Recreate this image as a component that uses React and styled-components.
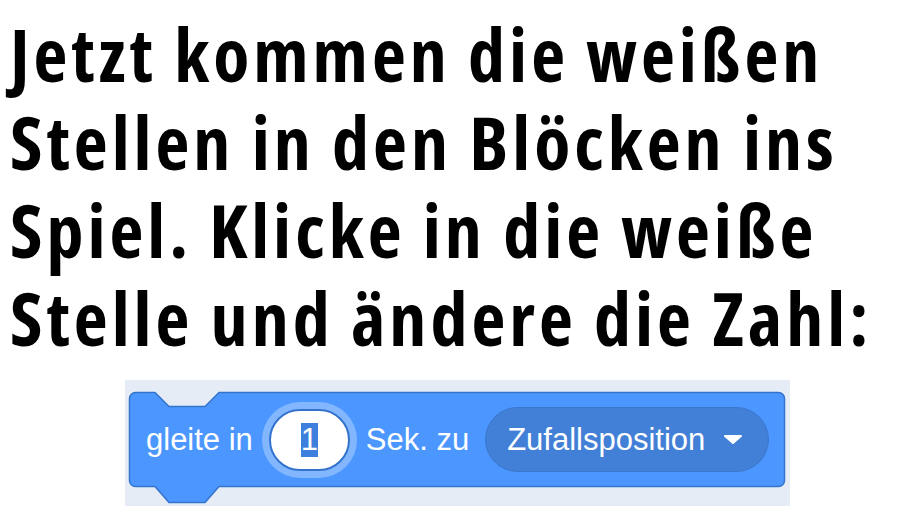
import styled, { createGlobalStyle } from 'styled-components'

const Global = createGlobalStyle`
  html, body {
    margin: 0;
    overflow: hidden;
    background: #fff;
  }
`

const Page = styled.div`
  width: 900px;
  height: 506px;
  display: flex;
  flex-direction: column;
`

const Heading = styled.h1`
  margin: 0;
  padding: 10px 0 0 10px;
  font-family: "Open Sans", "Liberation Sans", sans-serif;
  font-stretch: condensed;
  font-weight: 700;
  font-size: 74px;
  line-height: 88px;
  letter-spacing: 4px;
  color: #000;
`

const Panel = styled.div`
  margin: 18px 0 0 125px;
  width: 665px;
  height: 126px;
  padding: 12px 5px 0 4px;
  box-sizing: border-box;
  background: #e5ecf5;
`

const Block = styled.div`
  position: relative;
  height: 95px;
  display: flex;
  align-items: center;
  gap: 16px;
  padding: 0 16px 0 17px;
  font-family: "Liberation Sans", Arial, sans-serif;
  font-size: 31px;
  color: #fff;
`

const Shape = styled.svg`
  position: absolute;
  left: 0;
  top: 0;
  overflow: visible;
`

const Label = styled.span`
  position: relative;
  white-space: nowrap;
`

const NumberField = styled.div`
  position: relative;
  width: 81px;
  height: 62px;
  box-sizing: border-box;
  border: 2px solid #3373cc;
  border-radius: 31px;
  background: #fff;
  box-shadow: 0 0 0 7px rgba(255, 255, 255, 0.3);
  display: flex;
  align-items: center;
  justify-content: center;
`

const Selection = styled.span`
  background: #3d7fdc;
  color: #fff;
  line-height: 34px;
`

const Dropdown = styled.div`
  position: relative;
  width: 284px;
  height: 65px;
  box-sizing: border-box;
  border: 1px solid #3a77cc;
  border-radius: 33px;
  background: #4280d7;
  display: flex;
  align-items: center;
  justify-content: space-between;
  padding: 0 25px 0 21px;
`

const Caret = () => (
  <svg width="20" height="9" viewBox="0 0 20 9">
    <path d="M2 1 H18 L10 8 Z" fill="#fff" stroke="#fff" strokeWidth="2" strokeLinejoin="round" />
  </svg>
)

const BlockShape = ({ w, h }) => (
  <Shape width={w} height={h + 16} viewBox={`0 0 ${w} ${h + 16}`}>
    <path
      d={`M0.5 6.5 A6 6 0 0 1 6.5 0.5 H26 L40 14.5 H76 L90 0.5 H${w - 6.5} A6 6 0 0 1 ${w - 0.5} 6.5 V${h - 6.5} A6 6 0 0 1 ${w - 6.5} ${h - 0.5} H90 L76 ${h + 15.5} H40 L26 ${h - 0.5} H6.5 A6 6 0 0 1 0.5 ${h - 6.5} Z`}
      fill="#4c97ff"
      stroke="#3373cc"
      strokeWidth="1.5"
      strokeLinejoin="round"
    />
  </Shape>
)

export default function App() {
  return (
    <>
      <Global />
      <Page>
        <Heading>
          Jetzt kommen die weißen<br />
          Stellen in den Blöcken ins<br />
          Spiel. Klicke in die weiße<br />
          Stelle und ändere die Zahl:
        </Heading>
        <Panel>
          <Block>
            <BlockShape w={656} h={95} />
            <Label>gleite in</Label>
            <NumberField>
              <Selection>1</Selection>
            </NumberField>
            <Label>Sek. zu</Label>
            <Dropdown>
              <Label>Zufallsposition</Label>
              <Caret />
            </Dropdown>
          </Block>
        </Panel>
      </Page>
    </>
  )
}
